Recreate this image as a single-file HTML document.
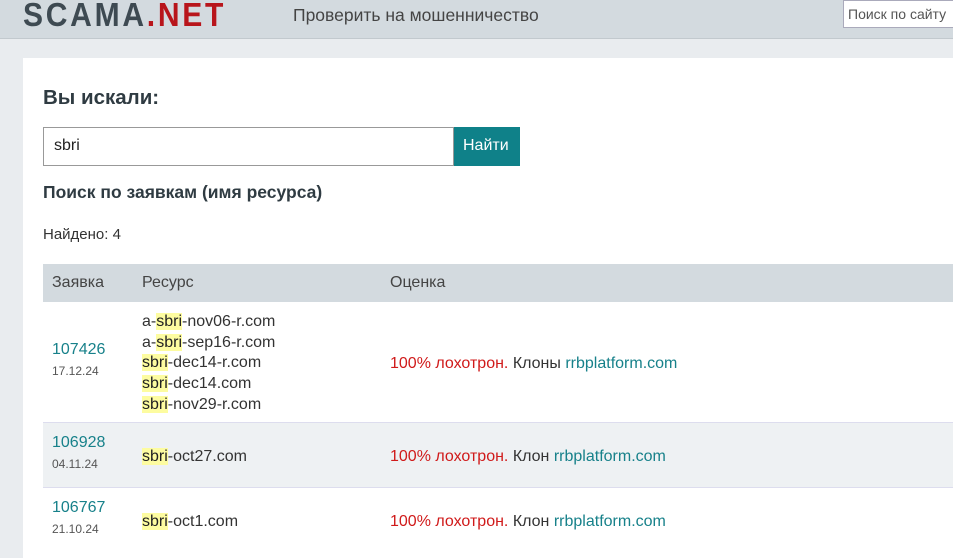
<!DOCTYPE html>
<html><head><meta charset="utf-8"><style>
*{margin:0;padding:0;box-sizing:border-box}
body{width:953px;height:548px;overflow:hidden;background:#e9ecef;font-family:"Liberation Sans",sans-serif;position:relative}
.hdr{position:absolute;left:0;top:0;width:953px;height:39px;background:#d3dadf;border-bottom:1px solid #c2c9ce}
.logo{position:absolute;left:23px;top:-4px;font:bold 33px "Liberation Sans",sans-serif;letter-spacing:3px;color:#3e4a52;transform:scaleX(0.91);transform-origin:left top}
.logo span{color:#b8151b}
.nav{position:absolute;left:293px;top:5px;font-size:17.5px;color:#444;}
.srch{position:absolute;left:843px;top:0;width:120px;height:28px;background:#fff;border:1px solid #aab;font-size:14px;color:#555;padding:5px 4px}
.card{position:absolute;left:23px;top:58px;width:940px;height:500px;background:#fff}
h1{position:absolute;left:43px;top:86px;font-size:20.5px;font-weight:bold;color:#2f3b42}
.inp{position:absolute;left:43px;top:127px;width:411px;height:39px;border:1px solid #999;font-size:16px;padding:9px 10px;color:#222}
.btn{position:absolute;left:454px;top:127px;width:66px;height:39px;background:#0f8189;color:#fff;font-size:16px;padding:10px 9px}
h2{position:absolute;left:43px;top:182px;font-size:17.5px;font-weight:bold;color:#2f3b42}
.found{position:absolute;left:43px;top:226px;font-size:15px;color:#333}
.row{position:absolute;left:43px;width:920px}
.th{top:264px;height:38px;background:#d3dadf;color:#444;font-size:15px}
.c{position:absolute;font-size:16px;color:#333;line-height:20.7px}
a{color:#17818a;text-decoration:none}
.d{font-size:12px;color:#555}
mark{background:#fdfca0;color:#222}
.r{color:#d01a1a}
</style></head><body>
<div class="hdr"><div class="logo">SCAMA<span>.NET</span></div><div class="nav">Проверить на мошенничество</div><div class="srch">Поиск по сайту</div></div>
<div class="card"></div>
<h1>Вы искали:</h1>
<div class="inp">sbri</div><div class="btn">Найти</div>
<h2>Поиск по заявкам (имя ресурса)</h2>
<div class="found">Найдено: 4</div>
<div class="row th"><div class="c" style="left:9px;top:9px;color:#444">Заявка</div><div class="c" style="left:99px;top:9px;color:#444">Ресурс</div><div class="c" style="left:347px;top:9px;color:#444">Оценка</div></div>
<div class="row" style="top:302px;height:121px;background:#fff;border-bottom:1px solid #dde">
<div class="c" style="left:9px;top:38px"><a>107426</a><br><span class="d">17.12.24</span></div>
<div class="c" style="left:99px;top:10px">a-<mark>sbri</mark>-nov06-r.com<br>a-<mark>sbri</mark>-sep16-r.com<br><mark>sbri</mark>-dec14-r.com<br><mark>sbri</mark>-dec14.com<br><mark>sbri</mark>-nov29-r.com</div>
<div class="c" style="left:347px;top:52px"><span class="r">100% лохотрон.</span> Клоны <a>rrbplatform.com</a></div></div>
<div class="row" style="top:423px;height:65px;background:#eef1f3;border-bottom:1px solid #dde">
<div class="c" style="left:9px;top:10px"><a>106928</a><br><span class="d">04.11.24</span></div>
<div class="c" style="left:99px;top:24px"><mark>sbri</mark>-oct27.com</div>
<div class="c" style="left:347px;top:24px"><span class="r">100% лохотрон.</span> Клон <a>rrbplatform.com</a></div></div>
<div class="row" style="top:488px;height:65px;background:#fff">
<div class="c" style="left:9px;top:10px"><a>106767</a><br><span class="d">21.10.24</span></div>
<div class="c" style="left:99px;top:24px"><mark>sbri</mark>-oct1.com</div>
<div class="c" style="left:347px;top:24px"><span class="r">100% лохотрон.</span> Клон <a>rrbplatform.com</a></div></div>
</body></html>
